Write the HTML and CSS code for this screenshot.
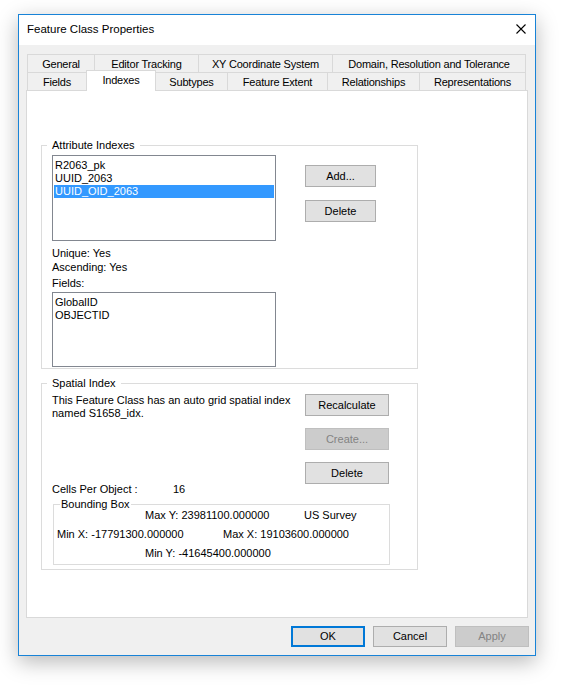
FILE: index.html
```html
<html>
<head>
	<meta charset="utf-8">
	<title>Feature Class Properties</title>
	<link rel="stylesheet" href="styles.css">
</head>
<body>
	<div class="window">
		<div class="titlebar">
			<span class="title">Feature Class Properties</span>
			<svg class="close" width="10" height="10" viewBox="0 0 10 10"><path d="M0.5 0.5 L9.5 9.5 M9.5 0.5 L0.5 9.5" stroke="#000" stroke-width="1.1" fill="none"/></svg>
		</div>
		<div class="client">
			<div class="tabs">
				<div class="tab-row">
					<div class="tab" style="width:67px">General</div>
					<div class="tab" style="width:104px">Editor Tracking</div>
					<div class="tab" style="width:134px">XY Coordinate System</div>
					<div class="tab tab-last" style="width:194px">Domain, Resolution and Tolerance</div>
				</div>
				<div class="tab-row">
					<div class="tab" style="width:59px">Fields</div>
					<div class="tab tab-active" style="width:70px">Indexes</div>
					<div class="tab" style="width:72px">Subtypes</div>
					<div class="tab" style="width:100px">Feature Extent</div>
					<div class="tab" style="width:92px">Relationships</div>
					<div class="tab tab-last" style="width:107px">Representations</div>
				</div>
			</div>
			<div class="panel">
				<fieldset class="group group-attr">
					<legend>Attribute Indexes</legend>
					<div class="attr-row">
						<div class="attr-left">
							<div class="listbox list-indexes">
								<div class="item">R2063_pk</div>
								<div class="item">UUID_2063</div>
								<div class="item selected">UUID_OID_2063</div>
							</div>
							<div class="info info-first">Unique: Yes</div>
							<div class="info">Ascending: Yes</div>
							<div class="info info-fields">Fields:</div>
							<div class="listbox list-fields">
								<div class="item">GlobalID</div>
								<div class="item">OBJECTID</div>
							</div>
						</div>
						<div class="btn-col btn-col-attr">
							<div class="btn btn-small">Add...</div>
							<div class="btn btn-small">Delete</div>
						</div>
					</div>
				</fieldset>
				<fieldset class="group group-spatial">
					<legend>Spatial Index</legend>
					<div class="spatial-row">
						<div class="spatial-text">This Feature Class has an auto grid spatial index named S1658_idx.</div>
						<div class="btn-col">
							<div class="btn btn-wide">Recalculate</div>
							<div class="btn btn-wide disabled">Create...</div>
							<div class="btn btn-wide">Delete</div>
						</div>
					</div>
					<div class="cells"><span class="cells-label">Cells Per Object :</span>16</div>
					<fieldset class="group group-bbox">
						<legend>Bounding Box</legend>
						<div class="bbox-grid">
							<div class="maxy">Max Y: 23981100.000000</div>
							<div class="units">US Survey</div>
							<div class="minx">Min X: -17791300.000000</div>
							<div class="maxx">Max X: 19103600.000000</div>
							<div class="miny">Min Y: -41645400.000000</div>
						</div>
					</fieldset>
				</fieldset>
			</div>
			<div class="footer">
				<div class="btn btn-foot btn-default">OK</div>
				<div class="btn btn-foot">Cancel</div>
				<div class="btn btn-foot disabled">Apply</div>
			</div>
		</div>
	</div>
</body>
</html>
```

FILE: styles.css
```css
* {
	box-sizing: border-box;
}
body {
	margin: 0;
	background: #fff;
	font-family: "Liberation Sans", Arial, sans-serif;
	font-size: 11px;
	color: #000;
}
.window {
	margin: 14px 0 0 18px;
	width: 518px;
	height: 642px;
	border: 1px solid #1883d7;
	background: #f0f0f0;
	box-shadow: 0 6px 20px rgba(0, 0, 0, 0.28);
}
.titlebar {
	height: 30px;
	background: #fff;
	display: flex;
	align-items: center;
	justify-content: space-between;
	padding: 0 9px 2px 8px;
}
.title {
	font-size: 11.5px;
}
.close {
	display: block;
}
.client {
	padding: 9px 6px 0 7px;
}
.tabs {
	padding-left: 1px;
}
.tab-row {
	display: flex;
	height: 18px;
}
.tab {
	height: 18px;
	border-top: 1px solid #d9d9d9;
	border-left: 1px solid #d9d9d9;
	background: #f0f0f0;
	text-align: center;
	line-height: 18px;
	letter-spacing: -0.2px;
	white-space: nowrap;
}
.tab-last {
	border-right: 1px solid #d9d9d9;
}
.tab-active {
	position: relative;
	z-index: 1;
	margin-top: -2px;
	margin-right: -1px;
	height: 21px;
	background: #fff;
	border-right: 1px solid #d9d9d9;
	line-height: 18px;
}
.panel {
	width: 502px;
	height: 528px;
	border: 1px solid #d9d9d9;
	background: #fff;
	padding: 48px 0 0 14px;
}
.group {
	margin: 0;
	border: 1px solid #dcdcdc;
	min-width: 0;
}
.group legend {
	padding: 0 5px;
	margin-left: -5px;
	line-height: 13px;
}
.group-attr {
	width: 377px;
	padding: 3px 0 1px 10px;
}
.attr-row {
	display: flex;
}
.attr-left {
	width: 224px;
}
.listbox {
	border: 1px solid #828790;
	background: #fff;
	padding: 3px 1px;
}
.list-indexes {
	height: 86px;
}
.list-fields {
	height: 75px;
	margin-top: 2px;
}
.item {
	height: 13px;
	line-height: 13px;
	padding-left: 1px;
	white-space: nowrap;
}
.selected {
	background: #3399ff;
	color: #fff;
}
.info {
	line-height: 14px;
}
.info-first {
	margin-top: 5px;
}
.info-fields {
	margin-top: 2px;
}
.btn-col {
	display: flex;
	flex-direction: column;
	gap: 12px;
}
.btn-col-attr {
	margin-left: 29px;
	padding-top: 10px;
	gap: 13px;
}
.btn {
	height: 22px;
	line-height: 20px;
	text-align: center;
	background: #e1e1e1;
	border: 1px solid #adadad;
}
.btn-small {
	width: 71px;
}
.btn-wide {
	width: 84px;
}
.disabled {
	background: #cccccc;
	border-color: #bfbfbf;
	color: #838383;
}
.group-spatial {
	width: 377px;
	margin-top: 8px;
	padding: 4px 0 4px 10px;
}
.spatial-row {
	display: flex;
}
.spatial-text {
	width: 253px;
	line-height: 13px;
}
.cells {
	line-height: 13px;
	margin-top: -1px;
}
.cells-label {
	display: inline-block;
	width: 121px;
}
.group-bbox {
	width: 337px;
	margin: 2px 0 0 1px;
	padding: 0 0 1px 3px;
}
.group-bbox legend {
	padding: 0 1px;
	margin-left: 3px;
}
.bbox-grid {
	display: grid;
	grid-template-columns: 88px 78px 81px 1fr;
	grid-auto-rows: 19px;
	line-height: 19px;
	margin-top: -5px;
	white-space: nowrap;
}
.maxy {
	grid-column: 2 / 4;
}
.units {
	grid-column: 4;
}
.minx {
	grid-row: 2;
	grid-column: 1 / 3;
}
.maxx {
	grid-row: 2;
	grid-column: 3 / 5;
}
.miny {
	grid-row: 3;
	grid-column: 2 / 4;
}
.footer {
	width: 503px;
	display: flex;
	justify-content: flex-end;
	gap: 8px;
	margin-top: 8px;
}
.btn-foot {
	width: 74px;
	height: 21px;
	line-height: 19px;
}
.btn-default {
	border: 2px solid #0078d7;
	line-height: 17px;
}
```
